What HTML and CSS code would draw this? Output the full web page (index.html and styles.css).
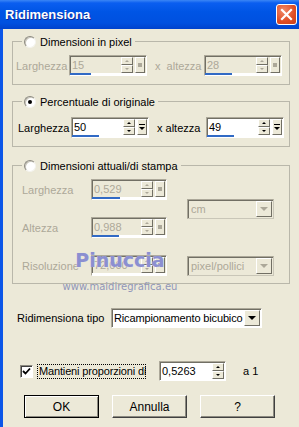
FILE: index.html
```html
<!DOCTYPE html>
<html lang="it">
<head>
    <meta charset="UTF-8">
    <title>Ridimensiona</title>
    <link rel="stylesheet" href="styles.css">
</head>
<body>
<div class="window">
    <div class="titlebar">
        <span class="title">Ridimensiona</span>
        <div class="close">
            <svg width="13" height="13" viewBox="0 0 13 13"><path d="M2 2 L11 11 M11 2 L2 11" stroke="#fff" stroke-width="2.2" stroke-linecap="square"/></svg>
        </div>
    </div>

    <div class="client">
        <!-- pixel size -->
        <fieldset class="group g1">
            <legend><span class="radio"></span>Dimensioni in pixel</legend>
            <div class="row">
                <span class="lbl w-larg dis">Larghezza</span>
                <div class="num dis">
                    <div class="num-main">
                        <span class="val">15</span>
                        <div class="spin"><span class="sb up"></span><span class="sb down"></span></div>
                        <span class="extra"><i class="sq"></i></span>
                    </div>
                    <div class="track"><div class="fill" style="width:28%"></div></div>
                </div>
                <span class="lbl w-alt dis">x&nbsp; altezza</span>
                <div class="num dis">
                    <div class="num-main">
                        <span class="val">28</span>
                        <div class="spin"><span class="sb up"></span><span class="sb down"></span></div>
                        <span class="extra"><i class="sq"></i></span>
                    </div>
                    <div class="track"><div class="fill" style="width:36%"></div></div>
                </div>
            </div>
        </fieldset>

        <!-- percentage -->
        <fieldset class="group g2">
            <legend><span class="radio on"></span>Percentuale di originale</legend>
            <div class="row">
                <span class="lbl w-larg">Larghezza</span>
                <div class="num">
                    <div class="num-main">
                        <span class="val">50</span>
                        <div class="spin"><span class="sb up"></span><span class="sb down"></span></div>
                        <span class="extra"><i class="dd"></i></span>
                    </div>
                    <div class="track"><div class="fill" style="width:36%"></div></div>
                </div>
                <span class="lbl w-alt">x altezza</span>
                <div class="num">
                    <div class="num-main">
                        <span class="val">49</span>
                        <div class="spin"><span class="sb up"></span><span class="sb down"></span></div>
                        <span class="extra"><i class="dd"></i></span>
                    </div>
                    <div class="track"><div class="fill" style="width:35%"></div></div>
                </div>
            </div>
        </fieldset>

        <!-- print size -->
        <fieldset class="group g3">
            <legend><span class="radio"></span>Dimensioni attuali/di stampa</legend>
            <div class="grid">
                <span class="lbl dis">Larghezza</span>
                <div class="num dis">
                    <div class="num-main">
                        <span class="val">0,529</span>
                        <div class="spin"><span class="sb up"></span><span class="sb down"></span></div>
                        <span class="extra"><i class="sq"></i></span>
                    </div>
                    <div class="track"><div class="fill" style="width:38%"></div></div>
                </div>
                <div class="combo dis c-unit"><span class="cval">cm</span><span class="cbtn"></span></div>

                <span class="lbl dis">Altezza</span>
                <div class="num dis">
                    <div class="num-main">
                        <span class="val">0,988</span>
                        <div class="spin"><span class="sb up"></span><span class="sb down"></span></div>
                        <span class="extra"><i class="sq"></i></span>
                    </div>
                    <div class="track"><div class="fill" style="width:36%"></div></div>
                </div>

                <span class="lbl dis">Risoluzione</span>
                <div class="num dis">
                    <div class="num-main">
                        <span class="val">72,000</span>
                        <div class="spin"><span class="sb up"></span><span class="sb down"></span></div>
                        <span class="extra"><i class="sq"></i></span>
                    </div>
                    <div class="track"><div class="fill" style="width:0%"></div></div>
                </div>
                <div class="combo dis c-res"><span class="cval">pixel/pollici</span><span class="cbtn"></span></div>
            </div>
        </fieldset>

        <div class="tipo">
            <span class="tipo-lbl">Ridimensiona tipo</span>
            <div class="combo"><span class="cval">Ricampionamento bicubico</span><span class="cbtn"></span></div>
        </div>

        <div class="keep">
            <span class="check">
                <svg width="9" height="9" viewBox="0 0 9 9"><path d="M1 4 L3.5 6.5 L8 1.5" fill="none" stroke="#000" stroke-width="1.8"/></svg>
            </span>
            <span class="focus">Mantieni proporzioni di</span>
            <div class="ratio">
                <span class="val">0,5263</span>
                <div class="spin"><span class="sb up"></span><span class="sb down"></span></div>
            </div>
            <span class="a1">a 1</span>
        </div>

        <div class="buttons">
            <button class="btn default">OK</button>
            <button class="btn">Annulla</button>
            <button class="btn">?</button>
        </div>
    </div>

    <div class="watermark">
        <span class="wm-name">Pinuccia</span>
        <span class="wm-site">www.maidiregrafica.eu</span>
    </div>
</div>
</body>
</html>
```

FILE: styles.css
```css
* {
    box-sizing: border-box;
}
body {
    margin: 0;
    font-family: "Liberation Sans", Arial, sans-serif;
    font-size: 11px;
    color: #000;
}
.window {
    width: 299px;
    height: 427px;
    position: relative;
    overflow: hidden;
    background: #ece9d8;
}

/* title bar */
.titlebar {
    height: 29px;
    display: flex;
    align-items: center;
    justify-content: space-between;
    padding: 0 2px 0 5px;
    background: linear-gradient(#3b86f5 0, #0a5ef0 3px, #0055e5 40%, #0050df 80%, #0042cc 100%);
}
.title {
    color: #fff;
    font-weight: bold;
    font-size: 13px;
    text-shadow: 1px 1px 0 #0b2a9a;
}
.close {
    width: 21px;
    height: 21px;
    border: 1px solid #fff;
    border-radius: 3px;
    background: radial-gradient(circle at 35% 30%, #f08a6a, #df4c24 60%, #c7401c);
    display: flex;
    align-items: center;
    justify-content: center;
}

.client {
    height: 398px;
    border-left: 3px solid #0b56e8;
    padding: 6px 0 0 9px;
}

/* group boxes */
.group {
    width: 278px;
    margin: 0;
    border: 1px solid #b9b7aa;
    padding: 7px 0 8px 0;
}
.group legend {
    display: flex;
    align-items: center;
    gap: 4px;
    height: 13px;
    margin-left: 9px;
    padding: 0 3px 0 2px;
    white-space: nowrap;
}
.g2 {
    margin-top: 10px;
    padding: 9px 0 8px 0;
}
.g3 {
    margin-top: 12px;
    padding: 7px 0 7px 0;
}
.radio {
    width: 12px;
    height: 12px;
    border-radius: 50%;
    background: #fff;
    border: 1px solid;
    border-color: #8c8a80 #f4f3ee #f4f3ee #8c8a80;
    box-shadow: inset 1px 1px 0 #c9c6ba;
    position: relative;
}
.radio.on::after {
    content: "";
    position: absolute;
    left: 3px;
    top: 3px;
    width: 4px;
    height: 4px;
    border-radius: 50%;
    background: #000;
}

.row {
    display: flex;
    align-items: center;
    padding-left: 3px;
}
.g2 .row {
    padding-left: 5px;
}
.lbl {
    white-space: nowrap;
}
.lbl.dis,
.dis .val,
.dis .cval {
    color: #aca899;
}
.w-larg {
    width: 53px;
}
.w-alt {
    width: 57px;
    padding-left: 8px;
}

/* numeric edit with slider strip */
.num {
    width: 78px;
    height: 21px;
    border: 1px solid;
    border-color: #aca899 #fff #fff #aca899;
    box-shadow: inset 1px 1px 0 #716f64;
    background: #fff;
    padding: 1px 1px 0 1px;
    display: flex;
    flex-direction: column;
}
.grid .num {
    width: 76px;
}
.num.dis {
    background: #ece9d8;
}
.num-main {
    flex: 1;
    display: flex;
    align-items: stretch;
}
.val {
    flex: 1;
    line-height: 16px;
    padding-left: 1px;
}
.track {
    height: 3px;
    background: #fff;
    margin: 0 -1px;
}
.fill {
    height: 2px;
    background: #316ac5;
}
.spin {
    width: 12px;
    display: flex;
    flex-direction: column;
}
.sb {
    flex: 1;
    background: #ece9d8;
    border: 1px solid;
    border-color: #fff #716f64 #716f64 #fff;
    position: relative;
}
.sb::after {
    content: "";
    position: absolute;
    left: 3px;
    top: 2px;
    border-left: 2px solid transparent;
    border-right: 2px solid transparent;
}
.sb.up::after {
    border-bottom: 2px solid #000;
}
.sb.down::after {
    border-top: 2px solid #000;
}
.dis .sb.up::after {
    border-bottom-color: #aca899;
}
.dis .sb.down::after {
    border-top-color: #aca899;
}
.extra {
    width: 10px;
    margin-left: 2px;
    background: #ece9d8;
    border: 1px solid;
    border-color: #fff #716f64 #716f64 #fff;
    display: flex;
    align-items: center;
    justify-content: center;
}
.sq {
    width: 4px;
    height: 4px;
    background: #aca899;
}
.dd {
    width: 0;
    height: 0;
    margin-top: 3px;
    border-left: 3px solid transparent;
    border-right: 3px solid transparent;
    border-top: 3px solid #000;
    position: relative;
}
.dd::before {
    content: "";
    position: absolute;
    left: -3px;
    top: -6px;
    width: 6px;
    height: 1px;
    background: #000;
}

/* print size grid */
.grid {
    display: grid;
    grid-template-columns: 69px 76px 107px;
    row-gap: 17px;
    padding-left: 9px;
}
.grid .lbl {
    align-self: center;
}
.c-unit {
    grid-row: 1 / span 2;
    grid-column: 3;
    align-self: center;
    margin-left: 20px;
}
.c-res {
    grid-row: 3;
    grid-column: 3;
    align-self: center;
    margin-left: 20px;
}

/* combo boxes */
.combo {
    height: 20px;
    border: 1px solid;
    border-color: #aca899 #fff #fff #aca899;
    box-shadow: inset 1px 1px 0 #716f64;
    background: #fff;
    display: flex;
    align-items: stretch;
    padding: 1px 1px 1px 3px;
}
.combo.dis {
    background: #ece9d8;
    border-color: #aca899 #c9c6b8 #c9c6b8 #aca899;
}
.cval {
    flex: 1;
    line-height: 16px;
    white-space: nowrap;
    overflow: hidden;
}
.tipo .cval {
    letter-spacing: -0.15px;
    padding-left: 0;
}
.cbtn {
    width: 16px;
    background: #ece9d8;
    border: 1px solid;
    border-color: #fff #716f64 #716f64 #fff;
    position: relative;
}
.cbtn::after {
    content: "";
    position: absolute;
    left: 3px;
    top: 5px;
    border-left: 4px solid transparent;
    border-right: 4px solid transparent;
    border-top: 4px solid #000;
}
.dis .cbtn::after {
    border-top-color: #aca899;
}

.tipo {
    display: flex;
    align-items: center;
    margin-top: 24px;
    padding-left: 5px;
}
.tipo-lbl {
    width: 94px;
    white-space: nowrap;
}
.tipo .combo {
    width: 151px;
    padding-left: 2px;
}

/* keep proportions row */
.keep {
    display: flex;
    align-items: center;
    margin-top: 33px;
    padding-left: 8px;
}
.check {
    width: 13px;
    height: 13px;
    background: #fff;
    border: 1px solid;
    border-color: #8c8a80 #fff #fff #8c8a80;
    box-shadow: inset 1px 1px 0 #404040;
    display: flex;
    align-items: center;
    justify-content: center;
}
.focus {
    margin-left: 4px;
    width: 109px;
    outline: 1px dotted #000;
    outline-offset: -1px;
    padding: 1px 0 1px 2px;
    line-height: 13px;
    letter-spacing: -0.15px;
    white-space: nowrap;
    overflow: hidden;
}
.ratio {
    margin-left: 13px;
    width: 67px;
    height: 20px;
    display: flex;
    border: 1px solid;
    border-color: #aca899 #fff #fff #aca899;
    box-shadow: inset 1px 1px 0 #716f64;
    background: #fff;
    padding: 1px;
}
.ratio .val {
    line-height: 17px;
}
.a1 {
    margin-left: 17px;
}

/* push buttons */
.buttons {
    display: flex;
    gap: 13px;
    margin-top: 14px;
    padding-left: 12px;
}
.btn {
    width: 75px;
    height: 23px;
    font-family: "Liberation Sans", Arial, sans-serif;
    font-size: 12px;
    background: #ece9d8;
    border: 1px solid;
    border-color: #fff #404040 #404040 #fff;
    box-shadow: inset -1px -1px 0 #8c8a80;
    padding: 0;
}
.btn.default {
    border: 1px solid #000;
    box-shadow: inset 1px 1px 0 #fff, inset -1px -1px 0 #8c8a80;
}

/* watermark over the dialog */
.watermark {
    position: absolute;
    left: 58px;
    top: 249px;
    display: flex;
    flex-direction: column;
    align-items: center;
    width: 124px;
    pointer-events: none;
}
.wm-name {
    font-family: "DejaVu Sans", sans-serif;
    font-weight: bold;
    font-size: 19px;
    line-height: 22px;
    color: #8b8fd0;
    text-shadow: 0 0 1px #d8d8f0;
}
.wm-site {
    margin-top: 10px;
    font-family: "DejaVu Sans", sans-serif;
    font-size: 10px;
    line-height: 12px;
    color: #9096b8;
}
```
